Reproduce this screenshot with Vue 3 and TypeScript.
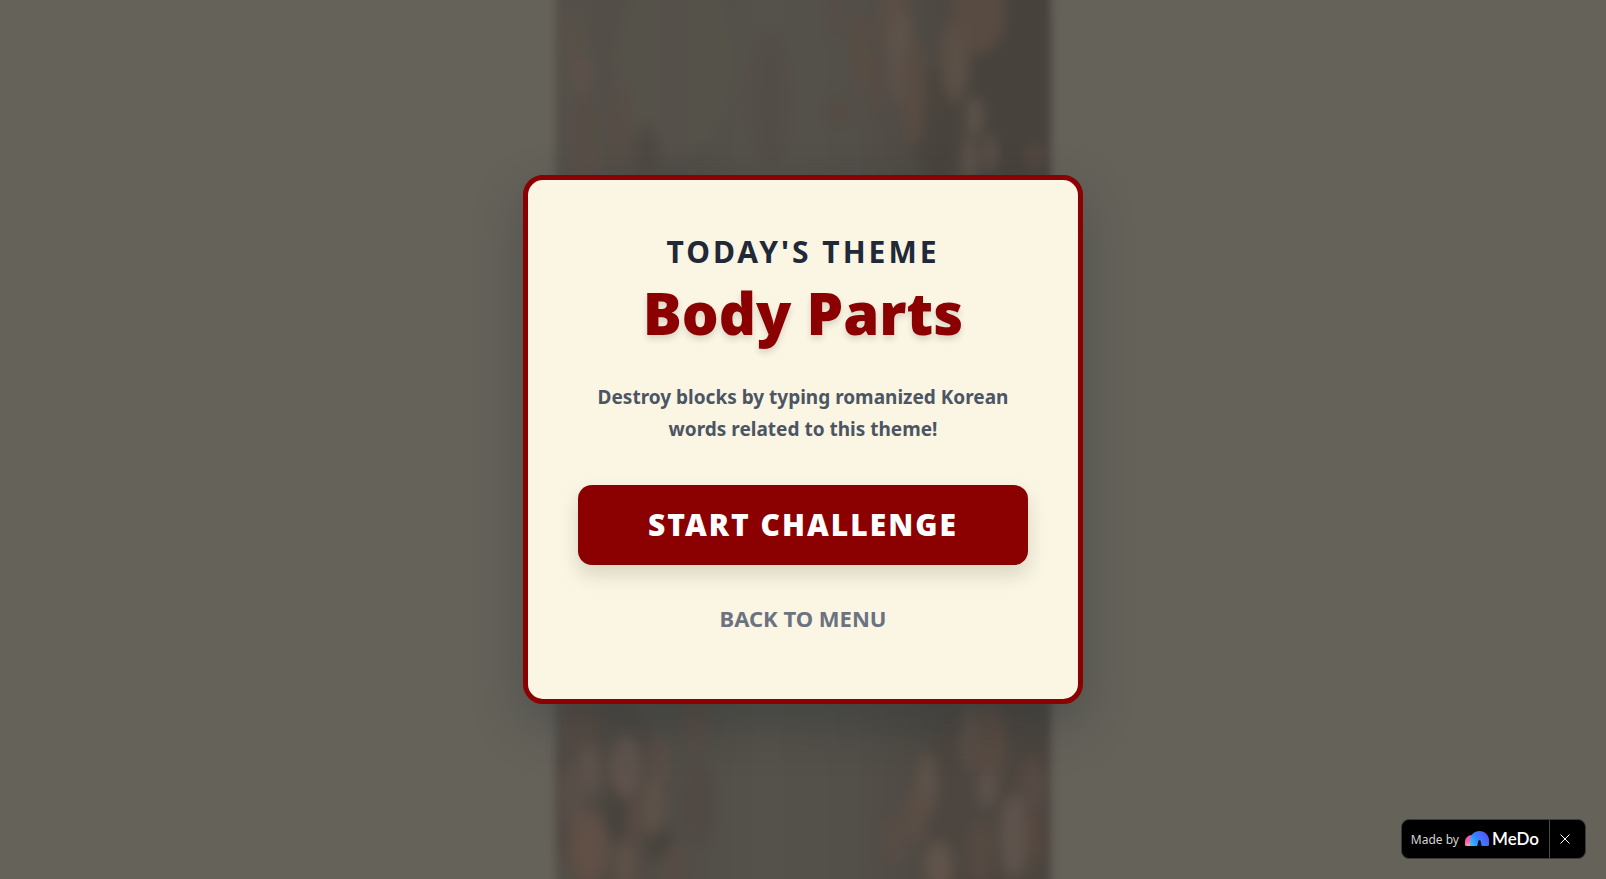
<script setup lang="ts">
import { ref } from 'vue'

interface Fleck {
  x: number
  y: number
  rx: number
  ry: number
  c: string
}

const theme = 'Body Parts'
const badgeVisible = ref(true)

const flecks: Fleck[] = [
  { x: 120, y: 60, rx: 60, ry: 100, c: '#56534b' },
  { x: 460, y: 90, rx: 50, ry: 130, c: '#47423c' },
  { x: 385, y: 125, rx: 24, ry: 60, c: '#48433c' },
  { x: 282, y: 12, rx: 7, ry: 26, c: '#594c47' },
  { x: 340, y: 22, rx: 17, ry: 38, c: '#5d4f46' },
  { x: 306, y: 50, rx: 9, ry: 38, c: '#5a4d43' },
  { x: 322, y: 84, rx: 8, ry: 30, c: '#5a4c45' },
  { x: 346, y: 60, rx: 10, ry: 46, c: '#63574f' },
  { x: 358, y: 90, rx: 13, ry: 56, c: '#5b4d43' },
  { x: 400, y: 60, rx: 14, ry: 42, c: '#5f5248' },
  { x: 424, y: 12, rx: 26, ry: 42, c: '#5c4d42' },
  { x: 420, y: 117, rx: 8, ry: 20, c: '#62564f' },
  { x: 415, y: 162, rx: 8, ry: 24, c: '#62564f' },
  { x: 435, y: 154, rx: 7, ry: 20, c: '#60524b' },
  { x: 480, y: 156, rx: 10, ry: 14, c: '#564842' },
  { x: 283, y: 112, rx: 9, ry: 16, c: '#574b44' },
  { x: 215, y: 100, rx: 20, ry: 70, c: '#534d47' },
  { x: 18, y: 45, rx: 9, ry: 34, c: '#5a5049' },
  { x: 27, y: 74, rx: 10, ry: 20, c: '#5f524b' },
  { x: 28, y: 128, rx: 11, ry: 34, c: '#594c46' },
  { x: 32, y: 165, rx: 14, ry: 18, c: '#5c4f48' },
  { x: 67, y: 126, rx: 9, ry: 44, c: '#594d47' },
  { x: 92, y: 150, rx: 12, ry: 26, c: '#4e4841' },
  { x: 55, y: 800, rx: 60, ry: 100, c: '#4f4842' },
  { x: 440, y: 800, rx: 70, ry: 100, c: '#4d453f' },
  { x: 62, y: 812, rx: 12, ry: 30, c: '#45403a' },
  { x: 105, y: 842, rx: 14, ry: 18, c: '#46413b' },
  { x: 26, y: 725, rx: 18, ry: 30, c: '#584a43' },
  { x: 34, y: 768, rx: 11, ry: 26, c: '#60544d' },
  { x: 18, y: 795, rx: 14, ry: 34, c: '#5a4e48' },
  { x: 71, y: 767, rx: 15, ry: 32, c: '#62554d' },
  { x: 105, y: 762, rx: 9, ry: 26, c: '#5d4f47' },
  { x: 142, y: 712, rx: 12, ry: 38, c: '#5a4c44' },
  { x: 99, y: 806, rx: 10, ry: 30, c: '#61544a' },
  { x: 80, y: 820, rx: 9, ry: 26, c: '#584b44' },
  { x: 143, y: 805, rx: 16, ry: 40, c: '#514843' },
  { x: 34, y: 848, rx: 20, ry: 36, c: '#635046' },
  { x: 71, y: 866, rx: 12, ry: 26, c: '#605147' },
  { x: 120, y: 864, rx: 10, ry: 22, c: '#594c44' },
  { x: 415, y: 736, rx: 10, ry: 36, c: '#5d514a' },
  { x: 436, y: 744, rx: 15, ry: 40, c: '#5c4d43' },
  { x: 432, y: 788, rx: 10, ry: 20, c: '#61554f' },
  { x: 372, y: 784, rx: 10, ry: 32, c: '#62564d' },
  { x: 361, y: 814, rx: 12, ry: 28, c: '#5d4f45' },
  { x: 478, y: 785, rx: 12, ry: 28, c: '#5a4d46' },
  { x: 459, y: 836, rx: 14, ry: 42, c: '#645850' },
  { x: 480, y: 838, rx: 9, ry: 28, c: '#574840' },
  { x: 425, y: 852, rx: 13, ry: 32, c: '#574b43' },
  { x: 384, y: 867, rx: 14, ry: 26, c: '#65574d' },
  { x: 339, y: 840, rx: 15, ry: 26, c: '#594d47' },
]

function startChallenge(): void {}
function backToMenu(): void {}
</script>

<template>
  <div class="screen">
    <div class="scene" aria-hidden="true">
      <svg class="bark" viewBox="0 0 496 879" preserveAspectRatio="none">
        <defs>
          <linearGradient id="barkBase" x1="0" y1="0" x2="1" y2="0">
            <stop offset="0" stop-color="#55514a" />
            <stop offset="0.1" stop-color="#534f48" />
            <stop offset="0.25" stop-color="#514d47" />
            <stop offset="0.42" stop-color="#55524b" />
            <stop offset="0.6" stop-color="#534f49" />
            <stop offset="0.78" stop-color="#4d4842" />
            <stop offset="1" stop-color="#4b4640" />
          </linearGradient>
          <clipPath id="barkEdge">
            <rect y="-20" width="496" height="919" />
          </clipPath>
        </defs>
        <g clip-path="url(#barkEdge)">
          <rect y="-20" width="496" height="919" fill="url(#barkBase)" />
          <g class="flecks">
            <ellipse
              v-for="(f, i) in flecks"
              :key="i"
              :cx="f.x"
              :cy="f.y"
              :rx="f.rx"
              :ry="f.ry"
              :fill="f.c"
            />
          </g>
        </g>
      </svg>
    </div>

    <main class="card">
      <h2 class="eyebrow">TODAY'S THEME</h2>
      <h1 class="theme">{{ theme }}</h1>
      <p class="hint">Destroy blocks by typing romanized Korean words related to this theme!</p>
      <button class="start" type="button" @click="startChallenge">START CHALLENGE</button>
      <button class="back" type="button" @click="backToMenu">BACK TO MENU</button>
    </main>

    <aside v-if="badgeVisible" class="badge">
      <a class="made" href="#">
        <span class="by">Made by</span>
        <svg class="logo" viewBox="0 0 24 15" aria-hidden="true">
          <defs>
            <linearGradient id="pink" x1="0" y1="0" x2="0.3" y2="1">
              <stop offset="0" stop-color="#f84fb4" />
              <stop offset="0.6" stop-color="#ff5f9e" />
              <stop offset="1" stop-color="#ffa18c" />
            </linearGradient>
            <linearGradient id="blue" x1="0" y1="1" x2="1" y2="0.5">
              <stop offset="0" stop-color="#2fd0ff" />
              <stop offset="0.45" stop-color="#3186ff" />
              <stop offset="1" stop-color="#5a55f5" />
            </linearGradient>
          </defs>
          <path d="M0 13.500V11C0 7 3 4 7 4H10V15H1.500Q0 15 0 13.500Z" fill="url(#pink)" />
          <path
            d="M5 15V9.500C5 4 9.300 0 14.500 0S24 4 24 9.500V13.500Q24 15 22.500 15Z"
            fill="url(#blue)"
          />
          <path d="M14.500 9C12.700 9 13.200 13.500 12 15H17C15.800 13.500 16.300 9 14.500 9Z" fill="#071030" />
        </svg>
        <span class="brand">MeDo</span>
      </a>
      <button class="close" type="button" aria-label="Close" @click="badgeVisible = false">
        <svg viewBox="0 0 10 10" aria-hidden="true">
          <path d="M0.500 0.500L9.500 9.500M9.500 0.500L0.500 9.500" />
        </svg>
      </button>
    </aside>
  </div>
</template>

<style>
body {
  margin: 0;
}
</style>

<style scoped>
.screen {
  position: relative;
  display: flex;
  align-items: center;
  justify-content: center;
  min-height: 100vh;
  overflow: hidden;
  background: #65625a;
  font-family: 'Noto Sans', 'Open Sans', sans-serif;
}

.scene {
  position: absolute;
  inset: 0;
  display: flex;
  justify-content: center;
}

.bark {
  width: 496px;
  max-width: 100%;
  height: 100%;
  overflow: visible;
  filter: blur(4px);
}

.flecks {
  filter: blur(5px);
  opacity: 0.8;
}

.card {
  position: relative;
  box-sizing: border-box;
  width: 560px;
  max-width: 100%;
  padding: 50px;
  border: 5px solid #8b0000;
  border-radius: 20px;
  background: #fbf5e4;
  box-shadow: 0 20px 50px rgba(30, 44, 48, 0.3);
  display: flex;
  flex-direction: column;
  text-align: center;
}

.eyebrow {
  margin: 0 0 6px;
  font-size: 30px;
  line-height: 44px;
  font-weight: 700;
  letter-spacing: 3px;
  color: #1f2937;
}

.theme {
  margin: 0 0 35px;
  font-size: 58px;
  line-height: 66px;
  font-weight: 900;
  color: #8b0000;
  text-shadow: 0 4px 6px rgba(20, 40, 20, 0.15);
}

.hint {
  margin: 0 0 40px;
  font-size: 19px;
  line-height: 32px;
  font-weight: 700;
  color: #4b5563;
}

button {
  border: 0;
  font-family: inherit;
  cursor: pointer;
}

.start {
  padding: 20px;
  border-radius: 14px;
  background: #8b0000;
  box-shadow: 0 10px 20px rgba(30, 40, 10, 0.15);
  color: #ffffff;
  font-size: 30px;
  line-height: 40px;
  font-weight: 900;
  letter-spacing: 2px;
}

.back {
  margin-top: 22px;
  padding: 15px;
  background: transparent;
  color: #6b7280;
  font-size: 22px;
  line-height: 32px;
  font-weight: 700;
}

.badge {
  position: absolute;
  right: 20px;
  bottom: 20px;
  box-sizing: border-box;
  height: 40px;
  display: flex;
  border: 1px solid #3c3c3c;
  border-radius: 8px;
  background: #000000;
}

.made {
  display: flex;
  align-items: center;
  padding: 0 10px 0 9px;
  text-decoration: none;
}

.by {
  margin-right: 6px;
  color: #d4d4d4;
  font-size: 12px;
}

.logo {
  width: 24px;
  height: 15px;
  margin-right: 3px;
  margin-bottom: 2px;
}

.brand {
  margin-bottom: 2px;
  color: #ffffff;
  font-family: Lato, sans-serif;
  font-size: 17px;
  font-weight: 600;
}

.close {
  width: 36px;
  padding: 0 5px 0 0;
  display: grid;
  place-items: center;
  border-left: 1px solid #4a4a4a;
  background: transparent;
}

.close svg {
  width: 10px;
  height: 10px;
  fill: none;
  stroke: #ffffff;
  stroke-width: 1;
}
</style>
